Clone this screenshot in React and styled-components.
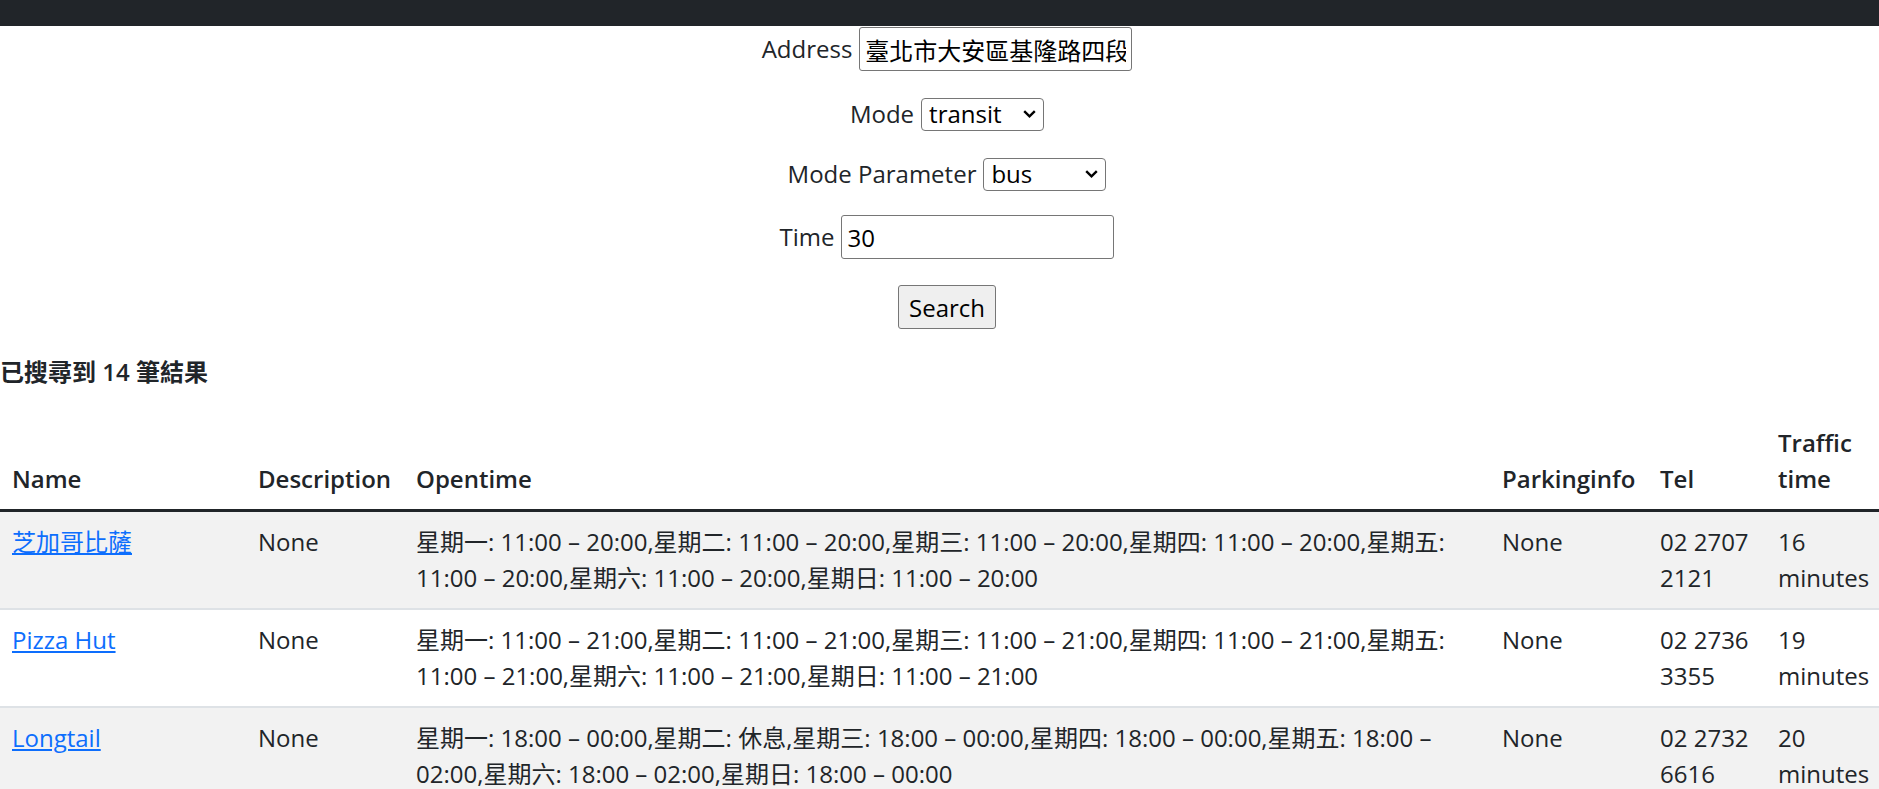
import styled, { createGlobalStyle } from "styled-components";

const GlobalStyle = createGlobalStyle`
  body {
    margin: 0;
    font-family: "Open Sans", "Noto Sans CJK TC", sans-serif;
    font-size: 24px;
    line-height: 1.5;
    color: #212529;
    background: #fff;
  }
  * {
    box-sizing: border-box;
  }
`;

const TopBar = styled.div`
  height: 26px;
  background: #212529;
`;

const SearchForm = styled.form`
  display: flex;
  flex-direction: column;
  padding-left: 15px;
`;

const FieldRow = styled.div`
  display: flex;
  justify-content: center;
  align-items: center;
  gap: 7px;
  height: ${(p) => p.$h}px;
  margin-top: ${(p) => p.$mt}px;
`;

const Label = styled.label`
  white-space: nowrap;
`;

const TextInput = styled.input`
  width: 273px;
  height: 44px;
  padding: 0 5px;
  border: 1px solid #767676;
  border-radius: 3px;
  font: 24px "Open Sans", "Noto Sans CJK TC", sans-serif;
  color: #000;
  background: #fff;
`;

const SelectWrap = styled.span`
  position: relative;
  display: inline-flex;
`;

const Select = styled.select`
  appearance: none;
  width: 123px;
  height: 33px;
  padding: 0 0 0 7px;
  border: 1px solid #767676;
  border-radius: 4px;
  font: 24px/1 "Open Sans", "Noto Sans CJK TC", sans-serif;
  color: #000;
  background: #fff;
`;

const Chevron = styled.svg`
  position: absolute;
  right: 8px;
  top: 12px;
  pointer-events: none;
`;

const SearchButton = styled.button`
  width: 98px;
  height: 44px;
  padding: 0;
  border: 1px solid #767676;
  border-radius: 3px;
  background: #efefef;
  font: 24px "Open Sans", sans-serif;
  color: #000;
`;

const ResultCount = styled.div`
  margin-top: 24px;
  font-size: 24px;
  font-weight: 600;
  line-height: 36px;
`;

const ResultTable = styled.table`
  width: 100%;
  margin-top: 23px;
  table-layout: fixed;
  border-collapse: collapse;
`;

const HeadCell = styled.th`
  padding: 12px;
  text-align: left;
  vertical-align: bottom;
  font-weight: 600;
  border-bottom: 3px solid #212529;
`;

const Row = styled.tr`
  background: ${(p) => (p.$striped ? "#f2f2f2" : "#fff")};
`;

const Cell = styled.td`
  padding: 12px;
  vertical-align: top;
  border-bottom: 2px solid #dee2e6;
`;

const PlaceLink = styled.a`
  color: #0d6efd;
  text-decoration: underline;
`;

const SelectField = ({ value, options }) => (
  <SelectWrap>
    <Select defaultValue={value}>
      {options.map((o) => (
        <option key={o}>{o}</option>
      ))}
    </Select>
    <Chevron width="13" height="8" viewBox="0 0 13 8">
      <path d="M1.2 1.2 L6.5 6.3 L11.8 1.2" fill="none" stroke="#000" strokeWidth="2.4" />
    </Chevron>
  </SelectWrap>
);

const d = " \u2013 ";
const week = (a, b) =>
  ["一", "二", "三", "四", "五", "六", "日"]
    .map((w) => `星期${w}: ${a}${d}${b}`)
    .join(",");

const places = [
  { name: "芝加哥比薩", open: week("11:00", "20:00"), tel: "02 2707 2121", time: "16 minutes" },
  { name: "Pizza Hut", open: week("11:00", "21:00"), tel: "02 2736 3355", time: "19 minutes" },
  {
    name: "Longtail",
    open: `星期一: 18:00${d}00:00,星期二: 休息,星期三: 18:00${d}00:00,星期四: 18:00${d}00:00,星期五: 18:00${d}02:00,星期六: 18:00${d}02:00,星期日: 18:00${d}00:00`,
    tel: "02 2732 6616",
    time: "20 minutes",
  },
];

const App = () => {
  return (
    <>
      <GlobalStyle />
      <TopBar />
      <SearchForm onSubmit={(e) => e.preventDefault()}>
        <FieldRow $h={46} $mt={0}>
          <Label>Address</Label>
          <TextInput defaultValue="臺北市大安區基隆路四段" />
        </FieldRow>
        <FieldRow $h={36} $mt={24}>
          <Label>Mode</Label>
          <SelectField value="transit" options={["driving", "walking", "transit"]} />
        </FieldRow>
        <FieldRow $h={36} $mt={24}>
          <Label>Mode Parameter</Label>
          <SelectField value="bus" options={["bus", "subway", "train"]} />
        </FieldRow>
        <FieldRow $h={46} $mt={22}>
          <Label>Time</Label>
          <TextInput defaultValue="30" />
        </FieldRow>
        <FieldRow $h={46} $mt={24}>
          <SearchButton type="submit">Search</SearchButton>
        </FieldRow>
      </SearchForm>
      <ResultCount>已搜尋到 14 筆結果</ResultCount>
      <ResultTable>
        <colgroup>
          <col style={{ width: 246 }} />
          <col style={{ width: 158 }} />
          <col style={{ width: 1086 }} />
          <col style={{ width: 158 }} />
          <col style={{ width: 118 }} />
          <col />
        </colgroup>
        <thead>
          <tr>
            <HeadCell>Name</HeadCell>
            <HeadCell>Description</HeadCell>
            <HeadCell>Opentime</HeadCell>
            <HeadCell>Parkinginfo</HeadCell>
            <HeadCell>Tel</HeadCell>
            <HeadCell>Traffic time</HeadCell>
          </tr>
        </thead>
        <tbody>
          {places.map((p, i) => (
            <Row key={p.name} $striped={i % 2 === 0}>
              <Cell>
                <PlaceLink href="#">{p.name}</PlaceLink>
              </Cell>
              <Cell>None</Cell>
              <Cell>{p.open}</Cell>
              <Cell>None</Cell>
              <Cell>{p.tel}</Cell>
              <Cell>{p.time}</Cell>
            </Row>
          ))}
        </tbody>
      </ResultTable>
    </>
  );
};

export default App;
